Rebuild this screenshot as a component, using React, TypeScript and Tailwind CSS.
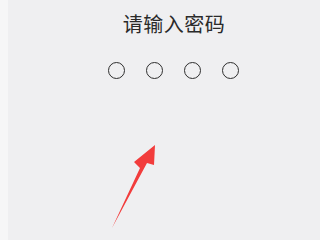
export default function App() {
	return (
		<div className="flex w-[320px] h-[240px] overflow-hidden bg-[#efeff1]">
			<div className="w-[8px] bg-[#f6f6f7]" />
			<div className="relative flex-1 flex flex-col items-center">
				<h1
					className="mt-[11px] ml-[20px] text-[20px] leading-[26px] text-[#2a2a2a] tracking-[0.5px]"
					style={{ fontFamily: '"Noto Sans CJK SC", sans-serif' }}
				>
					请输入密码
				</h1>
				<div className="mt-[25px] ml-[18px] flex gap-[21px]">
					{[0, 1, 2, 3].map((i) => (
						<span
							key={i}
							className="block w-[17px] h-[17px] rounded-full border-[1.5px] border-[#2e2e2e]"
						/>
					))}
				</div>
				<svg
					className="absolute left-[88px] top-[140px]"
					width="70"
					height="95"
					viewBox="0 0 70 95"
				>
					<path
						d="M16 88 L44 28 L38 22 L59 5 L58 25 L51 23 Z"
						fill="#f23c3c"
					/>
				</svg>
			</div>
		</div>
	);
}
